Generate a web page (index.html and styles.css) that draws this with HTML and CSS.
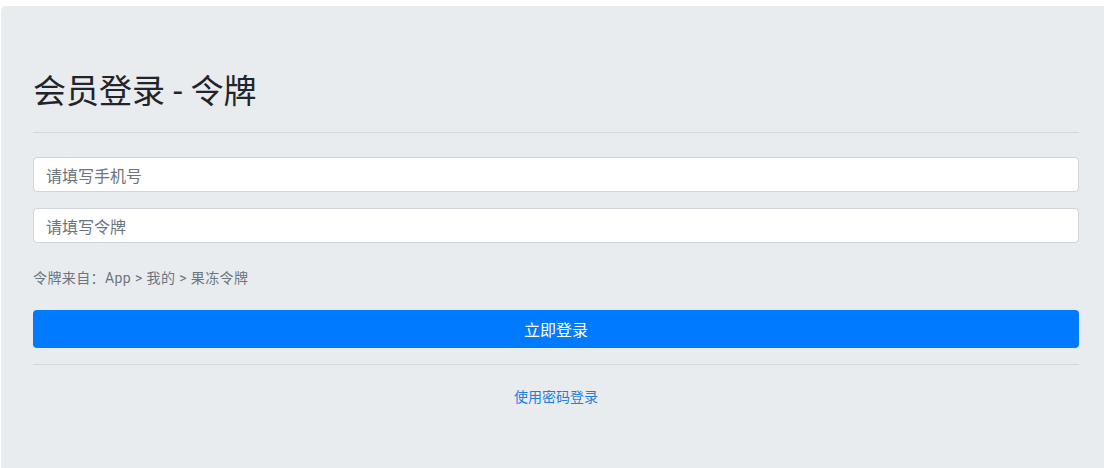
FILE: index.html
```html
<!DOCTYPE html>
<html>
<head>
    <meta charset="UTF-8">
    <title>会员登录 - 令牌</title>
    <link rel="stylesheet" href="styles.css">
</head>
<body>
    <div class="jumbotron">
        <h2 class="title">会员登录 - 令牌</h2>
        <hr class="divider first">

        <form class="login-form" onsubmit="return false;">
            <div class="form-group">
                <input type="text" class="form-control" id="mobile" placeholder="请填写手机号">
            </div>
            <div class="form-group">
                <input type="text" class="form-control" id="token" placeholder="请填写令牌">
            </div>
            <p class="hint">令牌来自：App &gt; 我的 &gt; 果冻令牌</p>
            <button type="submit" class="btn-submit">立即登录</button>
        </form>

        <hr class="divider second">
        <div class="switch">
            <a href="#" class="switch-link">使用密码登录</a>
        </div>
    </div>
</body>
</html>
```

FILE: styles.css
```css
* {
    box-sizing: border-box;
}

html, body {
    overflow: hidden;
}

body {
    margin: 0;
    background-color: #fff;
    font-family: Roboto, "Noto Sans CJK SC", sans-serif;
    color: #212529;
}

.jumbotron {
    width: 1110px;
    min-height: 480px;
    margin: 6px 0 0 1px;
    padding: 66px 32px 40px 32px;
    background-color: #e9ecef;
    border-radius: 5px;
}

.title {
    margin: 0;
    font-size: 33px;
    font-weight: 400;
    line-height: 40px;
}

.divider {
    margin: 0;
    border: 0;
    border-top: 1px solid #d3d6d9;
}

.divider.first {
    margin-top: 20px;
    margin-bottom: 24px;
}

.divider.second {
    margin-top: 16px;
    margin-bottom: 21px;
}

.form-group {
    margin-bottom: 16px;
}

.form-control {
    display: block;
    width: 100%;
    height: 35px;
    padding: 3px 12px 0 12px;
    font-family: inherit;
    font-size: 16px;
    color: #495057;
    background-color: #fff;
    border: 1px solid #ced4da;
    border-radius: 4px;
    outline: none;
}

.form-control::placeholder {
    color: #6c757d;
}

.hint {
    margin: 25px 0 21px 0;
    font-size: 14px;
    line-height: 21px;
    letter-spacing: 0.4px;
    color: #6c757d;
}

.btn-submit {
    display: block;
    width: 100%;
    height: 38px;
    padding: 0;
    font-family: inherit;
    font-size: 16px;
    color: #fff;
    background-color: #007bff;
    border: none;
    border-radius: 4px;
    cursor: pointer;
}

.switch {
    text-align: center;
    line-height: 21px;
}

.switch-link {
    font-size: 14px;
    color: #1a7fe0;
    text-decoration: none;
}
```
